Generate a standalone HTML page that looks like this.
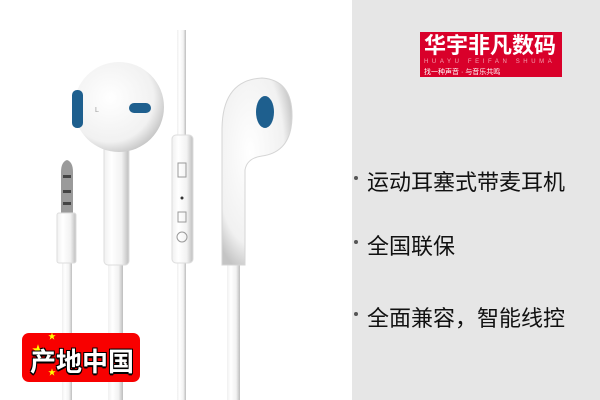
<!DOCTYPE html>
<html><head><meta charset="utf-8"><style>
body{margin:0;width:600px;height:400px;overflow:hidden;background:#fff;position:relative;font-family:"Liberation Sans","Noto Sans CJK SC",sans-serif}
.panel{position:absolute;left:352px;top:0;width:248px;height:400px;background:#e6e6e6}
.logo{position:absolute;left:420px;top:32px;width:142px;height:45px;background:#d9002a;color:#fff}
.logo .t{position:absolute;left:4px;top:1px;font-size:22px;font-weight:bold;white-space:nowrap;line-height:26px}
.logo .e{position:absolute;left:4px;top:27px;font-size:6px;letter-spacing:3.6px;color:#f3a0b0;white-space:nowrap}
.logo .s{position:absolute;left:4px;top:35px;font-size:7px;white-space:nowrap}
.li{position:absolute;left:354px;font-size:22px;color:#111;white-space:nowrap}
.li:before{content:"";position:absolute;left:0;top:11px;width:4px;height:4px;border-radius:2px;background:#555}
.li span{margin-left:13px}
.badge{position:absolute;left:22px;top:333px;width:118px;height:49px;background:#f80000;border-radius:7px}
.badge .tx{position:absolute;left:8px;top:9px;font-size:26px;font-weight:bold;color:#fff;text-shadow:1px 1px 0 #000,-1px -1px 0 #000,1px -1px 0 #000,-1px 1px 0 #000,0 2px 0 #000;white-space:nowrap}
</style></head><body>
<svg width="352" height="400" style="position:absolute;left:0;top:0">
<defs>
<linearGradient id="g" x1="0" x2="1"><stop offset="0" stop-color="#f0f0f0"/><stop offset=".3" stop-color="#fff"/><stop offset=".7" stop-color="#f2f2f2"/><stop offset="1" stop-color="#bdbdbd"/></linearGradient>
<radialGradient id="h" cx=".4" cy=".4" r=".65"><stop offset="0" stop-color="#fff"/><stop offset=".75" stop-color="#f1f1f1"/><stop offset="1" stop-color="#c4c4c4"/></radialGradient>
</defs>
<rect x="62" y="255" width="10" height="145" fill="url(#g)"/>
<rect x="108" y="255" width="15" height="145" fill="url(#g)"/>
<rect x="177" y="30" width="9" height="110" fill="url(#g)"/>
<rect x="177" y="255" width="9" height="145" fill="url(#g)"/>
<rect x="227" y="255" width="13" height="145" fill="url(#g)"/>
<path d="M61 213 L61 172 Q61 162 67 160 Q73 162 73 172 L73 213Z" fill="#9a9a9a"/>
<rect x="63" y="175" width="8" height="3" fill="#444"/><rect x="63" y="190" width="8" height="3" fill="#444"/><rect x="63" y="202" width="8" height="3" fill="#444"/>
<rect x="57" y="213" width="19" height="50" rx="2" fill="url(#g)" stroke="#ddd"/>
<rect x="104" y="140" width="25" height="125" rx="4" fill="url(#g)" stroke="#ddd"/>
<circle cx="119" cy="107" r="45" fill="url(#h)"/>
<rect x="72" y="90" width="11" height="38" rx="5" fill="#1e5f8e"/>
<rect x="129" y="103" width="22" height="10" rx="5" fill="#1e5f8e"/>
<text x="95" y="112" font-size="7" fill="#999">L</text>
<rect x="172" y="135" width="21" height="128" rx="4" fill="url(#g)" stroke="#ddd"/>
<rect x="178" y="163" width="8" height="14" fill="none" stroke="#999"/>
<circle cx="182" cy="198" r="1.5" fill="#333"/>
<rect x="178" y="212" width="8" height="10" fill="none" stroke="#999"/>
<circle cx="182" cy="237" r="5" fill="none" stroke="#999"/>
<path d="M222 265 L222 130 Q222 80 262 78 Q293 80 292 118 Q291 152 262 156 Q247 158 245 170 L245 265Z" fill="url(#h)" stroke="#d5d5d5"/>
<ellipse cx="265" cy="112" rx="9" ry="16" fill="#1e5f8e"/>
</svg>
<div class="panel"></div>
<div class="logo"><div class="t">华宇非凡数码</div><div class="e">HUAYU FEIFAN SHUMA</div><div class="s">找一种声音 · 与音乐共鸣</div></div>
<div class="li" style="top:165px"><span>运动耳塞式带麦耳机</span></div>
<div class="li" style="top:229px"><span>全国联保</span></div>
<div class="li" style="top:301px"><span>全面兼容，智能线控</span></div>
<div class="badge"><span style="position:absolute;left:10px;top:8px;color:#ff0;font-size:12px">★</span><span style="position:absolute;left:26px;top:-2px;color:#ff0;font-size:8px">★</span><span style="position:absolute;left:26px;top:34px;color:#ff0;font-size:8px">★</span><div class="tx">产地中国</div></div>
</body></html>
